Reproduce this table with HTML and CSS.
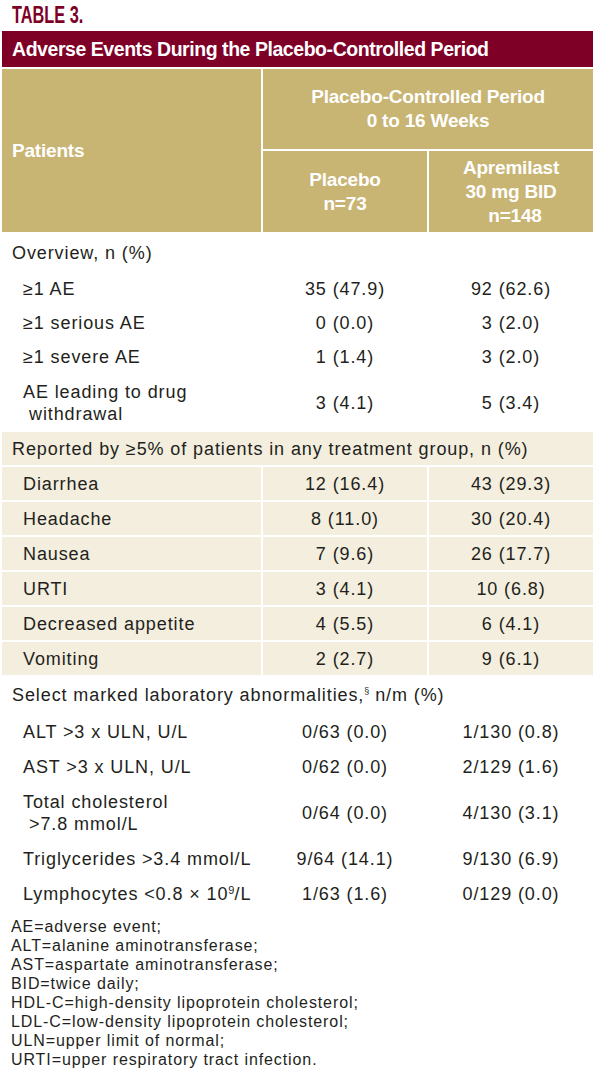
FILE: index.html
```html
<!DOCTYPE html>
<html lang="en">
<head>
<meta charset="utf-8">
<title>Table 3. Adverse Events During the Placebo-Controlled Period</title>
<link rel="stylesheet" href="styles.css">
</head>
<body>
<h1 class="table-label"><span>TABLE 3.</span></h1>
<table class="ae-table">
  <colgroup>
    <col class="c-label">
    <col class="c-val">
    <col class="c-val">
  </colgroup>
  <thead>
    <tr><th colspan="3" class="title">Adverse Events During the Placebo-Controlled Period</th></tr>
    <tr>
      <th rowspan="2" class="gold patients">Patients</th>
      <th colspan="2" class="gold period">Placebo-Controlled Period<br>0 to 16 Weeks</th>
    </tr>
    <tr>
      <th class="gold arm">Placebo<br>n=73</th>
      <th class="gold arm">Apremilast<br>30 mg BID<br><span class="nudge">n=148</span></th>
    </tr>
  </thead>
  <tbody class="plain">
    <tr class="sec first"><td colspan="3" class="sec-label">Overview, n (%)</td></tr>
    <tr class="row32"><td class="lbl">≥1 AE</td><td class="val">35 (47.9)</td><td class="val">92 (62.6)</td></tr>
    <tr class="row32"><td class="lbl">≥1 serious AE</td><td class="val">0 (0.0)</td><td class="val">3 (2.0)</td></tr>
    <tr class="row32"><td class="lbl">≥1 severe AE</td><td class="val">1 (1.4)</td><td class="val">3 (2.0)</td></tr>
    <tr class="tall"><td class="lbl hang">AE leading to drug withdrawal</td><td class="val">3 (4.1)</td><td class="val">5 (3.4)</td></tr>
  </tbody>
  <tbody class="cream">
    <tr class="row33"><td colspan="3" class="sec-label">Reported by ≥5% of patients in any treatment group, n (%)</td></tr>
    <tr class="row33"><td class="lbl">Diarrhea</td><td class="val">12 (16.4)</td><td class="val">43 (29.3)</td></tr>
    <tr class="row33"><td class="lbl">Headache</td><td class="val">8 (11.0)</td><td class="val">30 (20.4)</td></tr>
    <tr class="row33"><td class="lbl">Nausea</td><td class="val">7 (9.6)</td><td class="val">26 (17.7)</td></tr>
    <tr class="row33"><td class="lbl">URTI</td><td class="val">3 (4.1)</td><td class="val">10 (6.8)</td></tr>
    <tr class="row33"><td class="lbl">Decreased appetite</td><td class="val">4 (5.5)</td><td class="val">6 (4.1)</td></tr>
    <tr class="row33"><td class="lbl">Vomiting</td><td class="val">2 (2.7)</td><td class="val">9 (6.1)</td></tr>
  </tbody>
  <tbody class="plain">
    <tr class="sec lab-head"><td colspan="3" class="sec-label">Select marked laboratory abnormalities,<sup class="fn">§</sup> n/m (%)</td></tr>
    <tr class="row33"><td class="lbl">ALT &gt;3 x ULN, U/L</td><td class="val">0/63 (0.0)</td><td class="val">1/130 (0.8)</td></tr>
    <tr class="row33"><td class="lbl">AST &gt;3 x ULN, U/L</td><td class="val">0/62 (0.0)</td><td class="val">2/129 (1.6)</td></tr>
    <tr class="tall"><td class="lbl hang">Total cholesterol<br>&gt;7.8 mmol/L</td><td class="val">0/64 (0.0)</td><td class="val">4/130 (3.1)</td></tr>
    <tr class="row33"><td class="lbl">Triglycerides &gt;3.4 mmol/L</td><td class="val">9/64 (14.1)</td><td class="val">9/130 (6.9)</td></tr>
    <tr class="row33"><td class="lbl">Lymphocytes &lt;0.8 × 10<sup class="exp">9</sup>/L</td><td class="val">1/63 (1.6)</td><td class="val">0/129 (0.0)</td></tr>
  </tbody>
</table>
<div class="notes">
  <div>AE=adverse event;</div>
  <div>ALT=alanine aminotransferase;</div>
  <div>AST=aspartate aminotransferase;</div>
  <div>BID=twice daily;</div>
  <div>HDL-C=high-density lipoprotein cholesterol;</div>
  <div>LDL-C=low-density lipoprotein cholesterol;</div>
  <div>ULN=upper limit of normal;</div>
  <div>URTI=upper respiratory tract infection.</div>
</div>
</body>
</html>
```

FILE: styles.css
```css
body {
  margin: 0;
  background: #ffffff;
  font-family: "Liberation Sans", Arial, sans-serif;
  color: #231f20;
}

.table-label {
  margin: 0;
  height: 29px;
  line-height: 29px;
  padding-left: 12px;
  font-size: 24px;
  font-weight: 700;
  color: #7e0027;
  white-space: nowrap;
}

.table-label span {
  display: inline-block;
  transform: scaleX(0.68);
  transform-origin: left center;
}

.ae-table {
  border-collapse: separate;
  border-spacing: 2px;
  width: 595px;
  table-layout: fixed;
}

.c-label { width: 259px; }
.c-val { width: 164px; }

.title {
  background: #7e0027;
  color: #ffffff;
  height: 36px;
  padding: 0 0 0 10px;
  text-align: left;
  font-size: 19.5px;
  font-weight: 700;
  letter-spacing: -0.45px;
  white-space: nowrap;
}

.gold {
  background: #c8b473;
  color: #ffffff;
  font-weight: 700;
  font-size: 19px;
  line-height: 24px;
  letter-spacing: -0.2px;
  padding: 0;
  text-align: center;
}

.patients {
  text-align: left;
  padding-left: 10px;
}

.period { height: 80px; }
.arm { height: 81px; }

.nudge {
  position: relative;
  left: 4px;
}

.ae-table td {
  padding: 0;
  font-size: 18px;
  line-height: 22px;
  letter-spacing: 0.9px;
  vertical-align: middle;
  white-space: nowrap;
}

.cream td {
  background: #f3eedd;
}

.sec-label {
  padding-left: 10px !important;
}

.sec.first td { height: 37px; }
.sec.lab-head td { height: 36px; }
.row32 td { height: 32px; }
.row33 td { height: 33px; }
.tall td { height: 55px; }

.lbl {
  padding-left: 21px !important;
}

.lbl.hang {
  padding-left: 27px !important;
  text-indent: -6px;
  white-space: normal;
}

.val {
  text-align: center;
}

.fn {
  font-size: 9px;
  vertical-align: 7px;
  line-height: 0;
  letter-spacing: 0;
}

.exp {
  font-size: 11px;
  vertical-align: 6px;
  line-height: 0;
  letter-spacing: 0;
}

.notes {
  margin: 5px 0 0;
  padding-left: 11px;
  font-size: 16px;
  line-height: 19px;
  letter-spacing: 0.9px;
}
```
